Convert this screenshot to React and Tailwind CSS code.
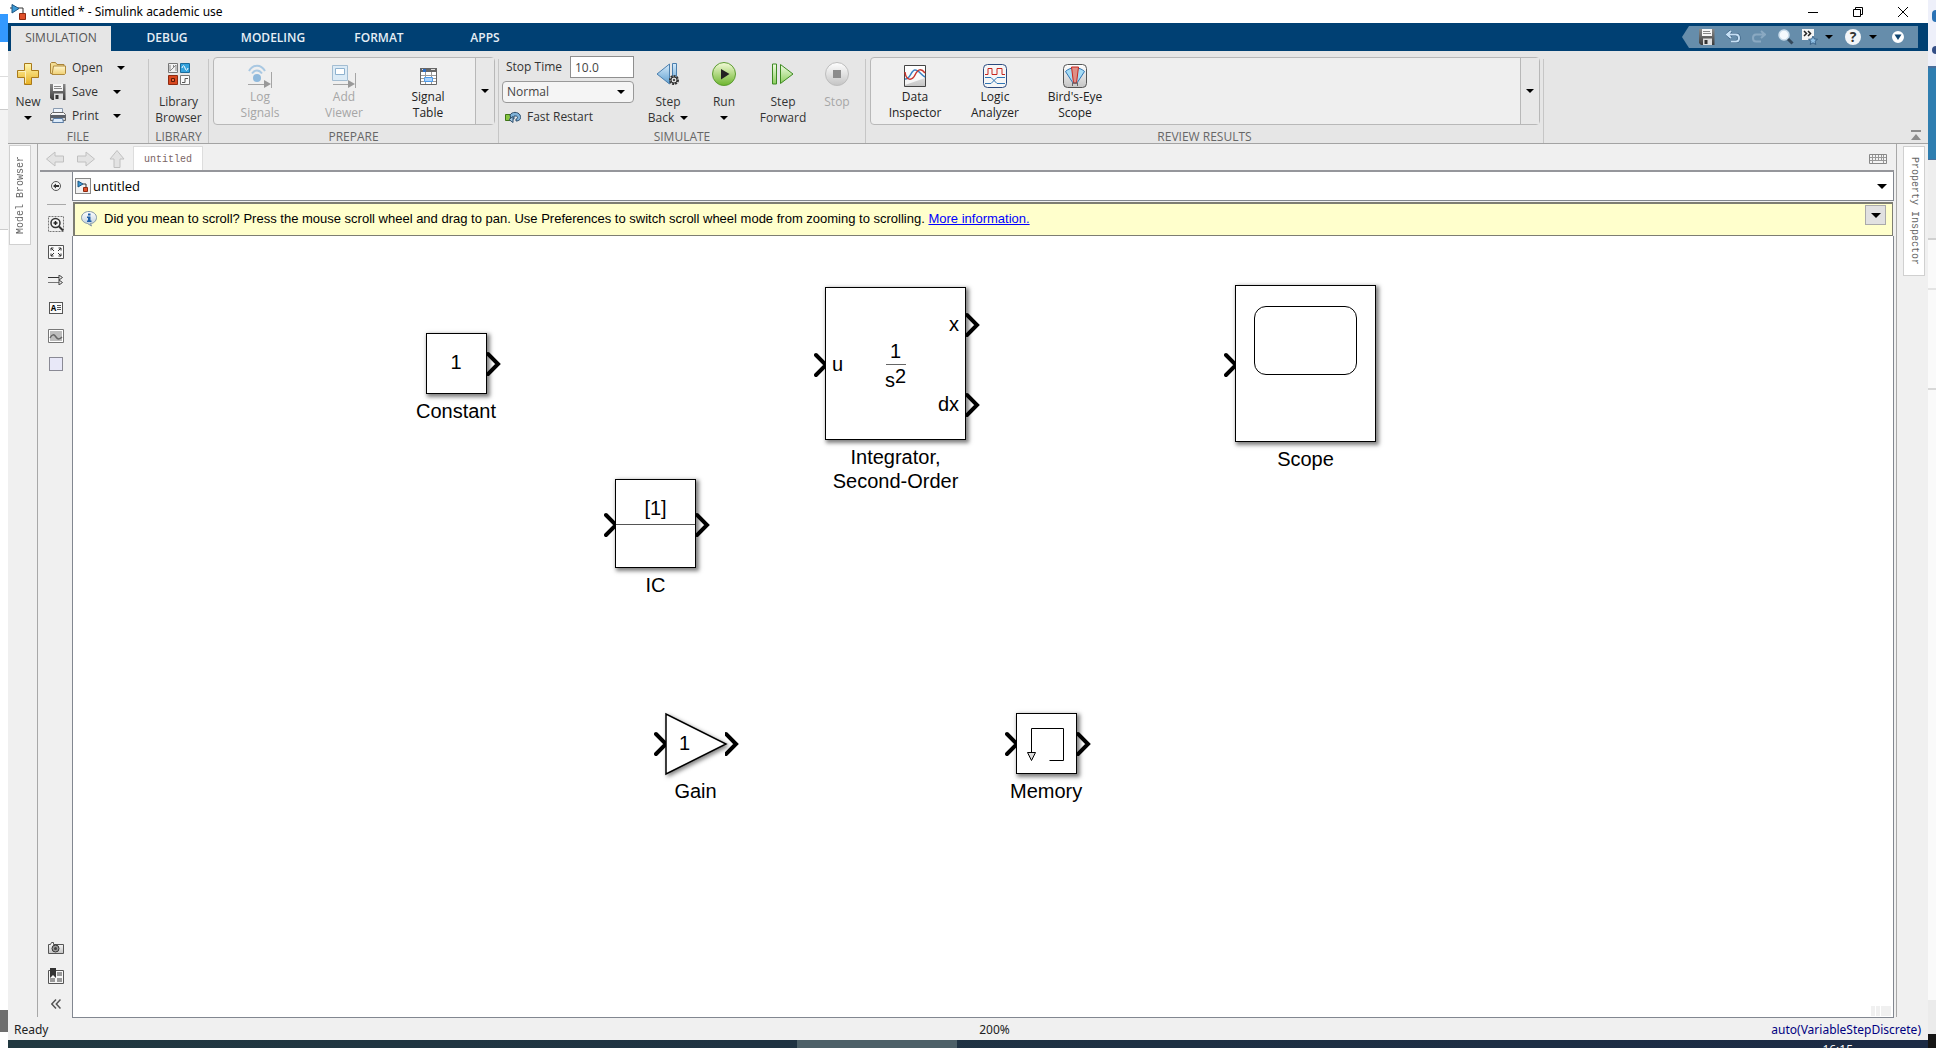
import { useState } from 'react'

/* ── Shared gradients for the toolbar icons ── */
function Gradients() {
    const stops = [
        ['gold', '#fff7b0', '#e8b021'],
        ['folder', '#fff6cf', '#efcf72'],
        ['sky', '#d8ecfb', '#5f9fd0'],
        ['lime', '#f4fbd8', '#6cb52d'],
        ['silver', '#ffffff', '#c4c4c4'],
        ['steel', '#8a8a8a', '#3c3c3c'],
        ['leaf', '#f0fbe4', '#8ccf5c'],
        ['bulb', '#ffffff', '#b9cbd9'],
    ]
    return (
        <svg className="absolute h-0 w-0" aria-hidden="true">
            <defs>
                {stops.map(([id, from, to]) => (
                    <linearGradient key={id} id={id} x1="0" y1="0" x2="0" y2="1">
                        <stop offset="0" stopColor={from} />
                        <stop offset="1" stopColor={to} />
                    </linearGradient>
                ))}
            </defs>
        </svg>
    )
}

function Svg({ w, h, className = '', children }) {
    return (
        <svg width={w} height={h} viewBox={`0 0 ${w} ${h}`} fill="none" className={`shrink-0 ${className}`} aria-hidden="true">
            {children}
        </svg>
    )
}

function Caret({ className = '' }) {
    return (
        <Svg w={8} h={4} className={className}>
            <path d="M0 0h8L4 4z" fill="#000" />
        </Svg>
    )
}

/* ── Toolbar icons ── */
function SimulinkIcon() {
    return (
        <Svg w={16} h={16}>
            <path d="M0 4h2M8 4h5v5" stroke="#333" />
            <path d="M2 .5l7 4-7 4.500z" fill="#3d9ad6" stroke="#1c5480" />
            <path d="M9.500 9.500h6v6h-6z" fill="#e0502a" stroke="#8f2a10" />
        </Svg>
    )
}

function PlusIcon() {
    return (
        <Svg w={22} h={22}>
            <path d="M7.500 .5h7v7h7v7h-7v7h-7v-7h-7v-7h7z" fill="url(#gold)" stroke="#a9791a" />
            <path d="M8.500 20V8.500H1.500" stroke="#fffbe0" opacity=".7" />
        </Svg>
    )
}

function FolderIcon() {
    return (
        <Svg w={16} h={14}>
            <path d="M.5 12.500V2.500l1-1h4l1.500 2h7v9z" fill="#f3dc93" stroke="#a88238" />
            <path d="M2 13.500l1.500-8.500h12v7.500l-1 1z" fill="url(#folder)" stroke="#b08a3c" />
        </Svg>
    )
}

function DiskIcon() {
    return (
        <Svg w={16} h={16}>
            <path d="M0 0h15.500v16H2l-2-2z" fill="url(#steel)" />
            <path d="M3 0h10v7H3z" fill="#f6f6f6" />
            <path d="M4 2.500h7M4 4.500h8" stroke="#888" />
            <path d="M4 9.500h9V16H4z" fill="#ddd" />
            <path d="M5.500 11h3v4h-3z" fill="#333" />
        </Svg>
    )
}

function PrinterIcon() {
    return (
        <Svg w={16} h={16}>
            <path d="M3.500 6V.5h9V6" fill="#eef4fa" stroke="#8a9bb0" />
            <path d="M.5 6.500l2-2h11l2 2v6H.5z" fill="url(#silver)" stroke="#666" />
            <path d="M1 7h14v3H1z" fill="#5a6068" />
            <path d="M3.500 10.500h9l1 4h-11z" fill="#dcebfa" stroke="#5b7da5" />
        </Svg>
    )
}

function LibraryIcon() {
    return (
        <Svg w={22} h={22}>
            <path d="M.5 .5h9v9h-9z" fill="#f2f2f2" stroke="#777" />
            <path d="M2 2v6M2 8l6-6M5.500 2v3M8 2v6" stroke="#888" />
            <path d="M12.500 .5h9v9h-9z" fill="#35a3dd" stroke="#1b6c9c" />
            <path d="M14 5c1-3 2-3 3 0s2 3 3 0" stroke="#fff" />
            <path d="M.5 12.500h9v9h-9z" fill="#d9481f" stroke="#8f2a10" />
            <path d="M3.500 15.500h3v3h-3z" fill="#e9693e" stroke="#5e1a08" />
            <path d="M12.500 12.500h9v9h-9z" fill="#fafafa" stroke="#777" />
            <path d="M14 19.500h3v-4h3" stroke="#555" />
        </Svg>
    )
}

function LogSignalsIcon() {
    return (
        <Svg w={24} h={24}>
            <path d="M1 7c4-7 12-7 16 0M4 9.500c3-4 7-4 10 0" stroke="#a9c8e2" strokeWidth="2" />
            <circle cx="9" cy="14" r="4" fill="#8fb9dc" />
            <path d="M0 20.500h16M23.500 8v16" stroke="#a5a5a5" />
            <path d="M16 16l7 4-7 4z" fill="#999" />
        </Svg>
    )
}

function AddViewerIcon() {
    return (
        <Svg w={24} h={24}>
            <path d="M.5 1.500h15v15H.5z" fill="#dcebf6" stroke="#a3bdd2" />
            <path d="M3.500 4.500h9v6h-9z" fill="#fff" stroke="#8fb2cf" />
            <path d="M1 20.500h16M23.500 9v15" stroke="#a5a5a5" />
            <path d="M16 16l7 4-7 4z" fill="#999" />
        </Svg>
    )
}

function SignalTableIcon() {
    return (
        <Svg w={17} h={17}>
            <path d="M.5 .5h16v16H.5z" fill="#fff" stroke="#666" />
            <path d="M0 0h17v4H0z" fill="#666" />
            <path d="M2 1.500h4M11 1.500h4" stroke="#ddd" />
            <path d="M3 1h3v3H3z" fill="#2b6cc4" />
            <path d="M1 7.500h15M1 10.500h15M1 13.500h15M5.500 4v12M11.500 4v12" stroke="#999" />
            <path d="M4.500 9.500h8v4h-8z" fill="#a9d2fb" stroke="#4e9bea" />
        </Svg>
    )
}

function FastRestartIcon() {
    return (
        <Svg w={16} h={12}>
            <path d="M.5 3.500h5v6h-5z" fill="#86c440" stroke="#3f7515" />
            <path d="M5 4c2-3.500 8-3.500 10 0 2 4-1 6-4 6V8c2 0 2-3 0-3H9v3H6z" fill="#7fb2d8" stroke="#2d4f6e" />
            <path d="M8 11.500L4 8.500l4-3z" fill="#aacbe4" stroke="#2d4f6e" />
        </Svg>
    )
}

function StepBackIcon() {
    return (
        <Svg w={24} h={24}>
            <path d="M13.500 2v20L1 12z" fill="url(#sky)" stroke="#4b7fae" />
            <path d="M16.500 1.500h4v20h-4z" fill="url(#sky)" stroke="#4b7fae" />
            <circle cx="18" cy="18" r="4" fill="#ccc" stroke="#333" strokeWidth="2" strokeDasharray="2 1" />
            <circle cx="18" cy="18" r="3" fill="#ddd" stroke="#333" />
            <circle cx="18" cy="18" r="1" fill="#222" />
        </Svg>
    )
}

function RunIcon() {
    return (
        <Svg w={24} h={24}>
            <circle cx="12" cy="12" r="11.500" fill="url(#lime)" stroke="#5d9c33" />
            <path d="M9 7l8.500 5L9 17.500z" fill="#222" />
        </Svg>
    )
}

function StepForwardIcon() {
    return (
        <Svg w={22} h={22}>
            <path d="M.5 1h4v20h-4z" fill="url(#leaf)" stroke="#3e8a22" />
            <path d="M8.500 1.500L21 11 8.500 20.500z" fill="url(#leaf)" stroke="#3e8a22" />
        </Svg>
    )
}

function StopIcon() {
    return (
        <Svg w={24} h={24}>
            <circle cx="12" cy="12" r="11.500" fill="url(#silver)" stroke="#bdbdbd" />
            <path d="M8 8h8v8H8z" fill="#8c8c8c" />
        </Svg>
    )
}

function DataInspectorIcon() {
    return (
        <Svg w={22} h={22}>
            <path d="M.5 .5h21v21H.5z" fill="url(#silver)" stroke="#444" />
            <path d="M1 1h20v12L1 20z" fill="#fff" opacity=".8" />
            <path d="M1 14c5 1 6-9 10-9s6 5 10 7" stroke="#3a82c4" strokeWidth="1.500" />
            <path d="M1 7c1 9 7 9 10 3s6-7 10-2" stroke="#c8342c" strokeWidth="1.500" />
        </Svg>
    )
}

function LogicAnalyzerIcon() {
    return (
        <Svg w={24} h={24}>
            <rect x=".5" y=".5" width="23" height="23" rx="4" fill="#f6f6f6" stroke="#2b4a7e" />
            <path d="M2 10.500h3v-6h4v6h5v-6h5v6h3" stroke="#c8261e" />
            <path d="M2 13.500h6l6 6h8M2 19.500h6l6-6h8" stroke="#2f75b5" />
        </Svg>
    )
}

function BirdsEyeIcon() {
    return (
        <Svg w={24} h={24}>
            <rect x=".5" y=".5" width="23" height="23" rx="4" fill="url(#silver)" stroke="#555" />
            <path d="M2.500 7.500c5-5 14-5 19 0L14 19h-4z" fill="#a6dcf5" stroke="#2f75b5" />
            <path d="M8.500 3h7l-2 16h-3z" fill="#dd8f87" stroke="#c8261e" />
            <path d="M9.500 22v-3h5v3" stroke="#666" />
        </Svg>
    )
}

/* ── Toolstrip parts ── */
function Section({ title, className = '', children }) {
    return (
        <>
            <section className={`flex flex-col ${className}`}>
                <div className="flex h-[79px]">{children}</div>
                <h2 className="text-center text-xs leading-[13px] text-[#666]">{title}</h2>
            </section>
            <div className="mt-2 w-px bg-[#c6c6c6]" />
        </>
    )
}

function BigButton({ icon, lines, caret, disabled, className = '' }) {
    return (
        <button disabled={disabled} className={`flex flex-col items-center pt-[11px] text-xs leading-4 text-[#333] disabled:text-[#a6a6a6] ${className}`}>
            <span className="mb-2 flex h-6 items-center">{icon}</span>
            <span>{lines[0]}</span>
            <span className="flex h-4 items-center gap-1.5">
                {lines[1]}
                {caret && <Caret />}
            </span>
        </button>
    )
}

function FileRow({ icon, label, className }) {
    return (
        <div className="flex h-6 items-center text-xs text-[#333]">
            <button className={`flex items-center gap-1.5 text-left ${className}`}>
                {icon}
                <span>{label}</span>
            </button>
            <button aria-label={`${label} options`}><Caret /></button>
        </div>
    )
}

function Gallery({ items, itemClass }) {
    return (
        <div className="mt-1.5 mr-[3px] ml-1 flex h-[68px] flex-1 rounded-sm border border-[#b8b8b8] bg-[#efefef]">
            <div className="flex flex-1 pl-1">
                {items.map(item => (
                    <button
                        key={item.lines[0]}
                        disabled={item.disabled}
                        className={`flex flex-col items-center pt-1.5 text-xs leading-4 text-[#222] disabled:text-[#a6a6a6] ${itemClass}`}
                    >
                        <span className="mb-px flex h-6 items-center">{item.icon}</span>
                        <span>{item.lines[0]}</span>
                        <span>{item.lines[1]}</span>
                    </button>
                ))}
            </div>
            <button aria-label="Show more" className="flex w-[19px] items-center justify-center border-l border-[#b8b8b8] bg-[#e8e8e8]">
                <Caret />
            </button>
        </div>
    )
}

const prepareItems = [
    { lines: ['Log', 'Signals'], icon: <LogSignalsIcon />, disabled: true },
    { lines: ['Add', 'Viewer'], icon: <AddViewerIcon />, disabled: true },
    { lines: ['Signal', 'Table'], icon: <SignalTableIcon /> },
]

const reviewItems = [
    { lines: ['Data', 'Inspector'], icon: <DataInspectorIcon /> },
    { lines: ['Logic', 'Analyzer'], icon: <LogicAnalyzerIcon /> },
    { lines: ["Bird's-Eye", 'Scope'], icon: <BirdsEyeIcon /> },
]

function QuickAccess() {
    return (
        <div className="mt-[3px] mr-2.5 flex h-[22px]">
            <Svg w={7} h={22}>
                <path d="M7 0v22L0 11z" fill="#668dab" />
            </Svg>
            <div className="flex items-center bg-[#668dab] pr-3.5 pl-2.5">
                <button aria-label="Save"><DiskIcon /></button>
                <button aria-label="Undo" className="ml-[11px]">
                    <Svg w={15} h={14}>
                        <path d="M5 1L1 4.500 5 8M1.500 4.500H10c4 0 4 7 0 7H5" stroke="#2f5577" strokeWidth="3" />
                        <path d="M5 1L1 4.500 5 8M1.500 4.500H10c4 0 4 7 0 7H5" stroke="#c6e0f5" strokeWidth="2" />
                    </Svg>
                </button>
                <button aria-label="Redo" disabled className="ml-2.5">
                    <Svg w={15} h={14}>
                        <path d="M10 1l4 3.500L10 8M13.500 4.500H5c-4 0-4 7 0 7h5" stroke="#8aa9c2" strokeWidth="2" />
                    </Svg>
                </button>
                <button aria-label="Search" className="ml-3">
                    <Svg w={16} h={16}>
                        <path d="M9.500 9.500l5 5" stroke="#33475a" strokeWidth="3" />
                        <circle cx="6" cy="6" r="5" fill="#f4f9fd" stroke="#c9dceb" strokeWidth="1.500" />
                    </Svg>
                </button>
                <button aria-label="Favorites" className="ml-2 flex items-center gap-[7px]">
                    <Svg w={16} h={16}>
                        <path d="M0 0h12v11H0z" fill="#f4f4f4" />
                        <path d="M2 2l2.500 2.500L2 7M6 2l2.500 2.500L6 7" stroke="#222" strokeWidth="1.500" />
                        <path d="M11 7l1.300 3 3.200.3-2.500 2 .8 3.200-2.800-1.700-2.800 1.700.8-3.200-2.500-2 3.200-.3z" fill="#8fc0e6" stroke="#3a6389" />
                    </Svg>
                    <Caret />
                </button>
                <button aria-label="Help" className="ml-3 flex items-center gap-2">
                    <span className="flex h-4 w-4 items-center justify-center rounded-full bg-[#f2f5f8] text-sm leading-4 font-bold text-[#333]">?</span>
                    <Caret />
                </button>
                <button aria-label="Customize quick access" className="ml-[15px]">
                    <Svg w={12} h={12}>
                        <circle cx="6" cy="6" r="5" fill="#fff" stroke="#fff" strokeWidth="2" />
                        <path d="M2.500 3.500h7L6 9z" fill="#11456f" />
                    </Svg>
                </button>
            </div>
        </div>
    )
}

function TitleBar() {
    return (
        <header className="flex h-[23px] items-center bg-white pr-5 pl-0.5 text-black">
            <SimulinkIcon />
            <h1 className="ml-[5px] flex-1 font-['Noto_Sans','Segoe_UI',sans-serif] text-xs">untitled * - Simulink academic use</h1>
            <div className="flex gap-[35px]">
                <button aria-label="Minimize">
                    <Svg w={10} h={10}><path d="M0 5.500h10" stroke="#000" /></Svg>
                </button>
                <button aria-label="Restore">
                    <Svg w={10} h={10}>
                        <path d="M.5 2.500h7v7h-7zM2.500 2V.5h7v7H8" stroke="#000" />
                    </Svg>
                </button>
                <button aria-label="Close">
                    <Svg w={10} h={10}><path d="M0 0l10 10M10 0L0 10" stroke="#000" /></Svg>
                </button>
            </div>
        </header>
    )
}

function TabBar({ active, onSelect }) {
    return (
        <nav className="flex h-7 items-start justify-between bg-[#004073]">
            <div className="ml-[3px] flex gap-1.5 pt-[3px]">
                {['SIMULATION', 'DEBUG', 'MODELING', 'FORMAT', 'APPS'].map(tab => (
                    <button
                        key={tab}
                        onClick={() => onSelect(tab)}
                        className={`h-[25px] w-[100px] pb-px text-xs ${tab === active ? 'bg-[#e6e6e6] text-[#555]' : 'font-semibold text-[#e6eef5]'}`}
                    >
                        {tab}
                    </button>
                ))}
            </div>
            <QuickAccess />
        </nav>
    )
}

function Toolstrip() {
    return (
        <div className="flex border-b border-[#a3a3a3] bg-[#e6e6e6]">
            <Section title="FILE" className="w-[140px]">
                <BigButton icon={<PlusIcon />} lines={['New', '']} caret className="w-10" />
                <div className="ml-0.5 flex flex-col pt-[5px]">
                    <FileRow icon={<FolderIcon />} label="Open" className="w-[67px]" />
                    <FileRow icon={<DiskIcon />} label="Save" className="w-[63px]" />
                    <FileRow icon={<PrinterIcon />} label="Print" className="w-[63px]" />
                </div>
            </Section>

            <Section title="LIBRARY" className="w-[59px]">
                <BigButton icon={<LibraryIcon />} lines={['Library', 'Browser']} className="w-full" />
            </Section>

            <Section title="PREPARE" className="w-[289px]">
                <Gallery items={prepareItems} itemClass="w-[84px]" />
            </Section>

            <Section title="SIMULATE" className="w-[366px] text-[#333]">
                <div className="ml-[3px] flex w-[132px] flex-col pt-[5px] text-xs">
                    <div className="flex items-center justify-between pl-1">
                        <label htmlFor="stop-time">Stop Time</label>
                        <input id="stop-time" defaultValue="10.0" className="h-[22px] w-16 border border-[#8f8f8f] bg-white px-1 text-[#444]" />
                    </div>
                    <div className="relative mt-[3px]">
                        <select aria-label="Simulation mode" className="h-[22px] w-full appearance-none rounded-sm border border-[#999] bg-[#f5f5f5] px-1 text-[#444]">
                            <option>Normal</option>
                            <option>Accelerator</option>
                            <option>Rapid Accelerator</option>
                        </select>
                        <Caret className="pointer-events-none absolute top-[9px] right-[9px]" />
                    </div>
                    <button className="mt-0.5 flex h-6 items-center gap-1.5 pl-[3px]">
                        <FastRestartIcon />
                        Fast Restart
                    </button>
                </div>
                <BigButton icon={<StepBackIcon />} lines={['Step', 'Back']} caret className="ml-1 w-[60px]" />
                <BigButton icon={<RunIcon />} lines={['Run', '']} caret className="w-[52px]" />
                <BigButton icon={<StepForwardIcon />} lines={['Step', 'Forward']} className="w-[66px]" />
                <BigButton icon={<StopIcon />} lines={['Stop', '']} disabled className="w-[42px]" />
            </Section>

            <Section title="REVIEW RESULTS" className="w-[677px]">
                <Gallery items={reviewItems} itemClass="w-20" />
            </Section>

            <button aria-label="Minimize toolstrip" className="mr-1.5 mb-0.5 ml-auto self-end">
                <Svg w={12} h={11}>
                    <path d="M1 0h10v2H1zM6 4l5 6H1z" fill="#8c8c8c" />
                </Svg>
            </button>
        </div>
    )
}

/* ── Editor frame ── */
function ArrowIcon({ className = '' }) {
    return (
        <Svg w={18} h={16} className={className}>
            <path d="M.5 8L9 1v4h8.500v6H9v4z" fill="#e3e3e3" stroke="#c0c0c0" />
        </Svg>
    )
}

function DocumentTabs() {
    return (
        <div className="flex h-7 items-center border-b-2 border-[#95969b] pl-1.5">
            <button aria-label="Back" disabled className="mt-1"><ArrowIcon /></button>
            <button aria-label="Forward" disabled className="mt-1 ml-[13px]"><ArrowIcon className="rotate-180" /></button>
            <button aria-label="Up" disabled className="mt-1 ml-[13px]"><ArrowIcon className="rotate-90" /></button>
            <button className="ml-[7px] h-6 w-[70px] self-end border border-b-0 border-[#ddd] bg-white pt-0.5 font-['Liberation_Mono',monospace] text-[10px] text-[#7a6464]">
                untitled
            </button>
            <button aria-label="Keyboard" className="mt-1 mr-[7px] ml-auto">
                <Svg w={18} h={10}>
                    <path d="M.5 .5h17v9H.5z" fill="#f4f4f4" stroke="#888" />
                    <path d="M1 3.500h16M1 6.500h16M3.500 1v8M6.500 1v5M9.500 1v5M12.500 1v5M14.500 1v8" stroke="#999" />
                </Svg>
            </button>
        </div>
    )
}

function ToolButton({ label, children }) {
    return (
        <button aria-label={label} className="flex h-7 w-8 items-center justify-center">
            {children}
        </button>
    )
}

function Palette() {
    return (
        <div className="flex w-8 flex-col items-center">
            <ToolButton label="Hide browser">
                <Svg w={10} h={10}>
                    <circle cx="5" cy="5" r="4.500" fill="#f4f4f4" stroke="#555" />
                    <path d="M5 2.500L2 5l3 2.500V6h3V4H5z" fill="#333" />
                </Svg>
            </ToolButton>
            <div className="mt-1 mb-[5px] h-px w-[19px] bg-[#a9a9a9]" />
            <ToolButton label="Fit zoom region">
                <Svg w={16} h={16}>
                    <path d="M.5 .5h15v15H.5z" stroke="#777" strokeDasharray="2 1" />
                    <circle cx="7.500" cy="7" r="4.500" fill="#f4f4f4" stroke="#333" strokeWidth="1.500" />
                    <path d="M5.500 7h4M7.500 5v4" stroke="#222" strokeWidth="1.500" />
                    <path d="M11 10.500l4 4" stroke="#333" strokeWidth="2" />
                </Svg>
            </ToolButton>
            <ToolButton label="Fit to view">
                <Svg w={16} h={14}>
                    <path d="M.5 .5h15v13H.5z" fill="#fafafa" stroke="#555" />
                    <path d="M3 5.500V3h2.500M10.500 3H13v2.500M13 8.500V11h-2.500M5.500 11H3V8.500M3 3l3 3M13 3l-3 3M13 11l-3-3M3 11l3-3" stroke="#333" />
                </Svg>
            </ToolButton>
            <ToolButton label="Sample time">
                <Svg w={16} h={10}>
                    <path d="M0 2.500h14" stroke="#333" />
                    <path d="M0 7.500h14" stroke="#777" />
                    <path d="M11 0l3.500 2.500L11 5zM11 5l3.500 2.500L11 10z" fill="#eee" stroke="#444" />
                </Svg>
            </ToolButton>
            <ToolButton label="Annotation">
                <span className="flex h-3 w-3.5 items-center justify-center gap-px border border-[#555] bg-[#fafafa] text-[8px] leading-none font-bold text-black">
                    A
                    <Svg w={4} h={6}><path d="M0 .5h4M0 2.500h4M0 4.500h4" stroke="#555" /></Svg>
                </span>
            </ToolButton>
            <ToolButton label="Image">
                <Svg w={16} h={14}>
                    <path d="M.5 .5h15v13H.5z" fill="#fff" stroke="#777" />
                    <path d="M2 2h12v10H2z" fill="#bdbdbd" />
                    <path d="M2 9c2-4 4-4 6-1s4 2 6 0" stroke="#666" strokeWidth="1.500" />
                </Svg>
            </ToolButton>
            <ToolButton label="Area">
                <span className="h-3.5 w-3.5 border border-[#8a8a95] bg-[#e8e8f8]" />
            </ToolButton>

            <div className="mt-auto flex flex-col">
                <ToolButton label="Screenshot">
                    <Svg w={16} h={12}>
                        <path d="M.5 2.500h2l1-2h2v2h10v9H.5z" fill="url(#silver)" stroke="#555" />
                        <circle cx="7.500" cy="6.500" r="3.500" fill="#999" stroke="#333" />
                        <circle cx="7.500" cy="6.500" r="1.500" fill="#444" />
                    </Svg>
                </ToolButton>
                <ToolButton label="Model data">
                    <Svg w={16} h={16}>
                        <path d="M.5 2.500h15v13H.5z" fill="#f6f6f6" stroke="#555" />
                        <path d="M9 4h5v4H9zM9 10h5v4H9zM2 10h5v4H2z" fill="#999" />
                        <path d="M2 0h6v10L5 7l-3 3z" fill="#333" />
                    </Svg>
                </ToolButton>
                <ToolButton label="Collapse palette">
                    <Svg w={10} h={10}>
                        <path d="M5 .5L.8 5 5 9.500M9.500 .5L5.300 5l4.200 4.500" stroke="#555" strokeWidth="1.500" />
                    </Svg>
                </ToolButton>
            </div>
        </div>
    )
}

function Breadcrumb() {
    return (
        <div className="flex h-[29px] items-center border border-t-0 border-[#828790] bg-white pr-1.5 pl-0.5">
            <span className="flex h-4 w-4 items-center justify-center border border-[#888] bg-[#f2f2f2]">
                <Svg w={12} h={12}>
                    <path d="M6 4h3v3" stroke="#333" />
                    <path d="M1 1l5 3-5 3z" fill="#3d9ad6" stroke="#1c5480" />
                    <path d="M6.500 7.500h4v4h-4z" fill="#e0502a" stroke="#8f2a10" />
                </Svg>
            </span>
            <a href="#untitled" className="ml-0.5 text-[13px] leading-5 text-black">untitled</a>
            <button aria-label="Show path" className="ml-auto">
                <Svg w={10} h={5}><path d="M0 0h10L5 5z" fill="#000" /></Svg>
            </button>
        </div>
    )
}

function Notice() {
    return (
        <div className="mx-px mt-px flex h-[34px] items-start border border-t-2 border-l-2 border-[#7d7d72] bg-[#ffffcc] pl-1.5 font-['Liberation_Sans',Arial,sans-serif] text-[13px] text-black">
            <Svg w={17} h={16} className="mt-[7px]">
                <path d="M8 .5c4 0 7.500 2.500 7.500 6s-3 6-6 6l1 2.500-4-2.500c-3-.5-6-2.500-6-6s3.500-6 7.500-6z" fill="url(#bulb)" stroke="#8095a5" />
                <path d="M7 2.500h2.500v2H7zM6 5.500h3.500v4h1V11H6V9.500h1V7H6z" fill="#1f5fa8" />
            </Svg>
            <p className="ml-1.5 leading-[30px]">
                Did you mean to scroll? Press the mouse scroll wheel and drag to pan. Use Preferences to switch scroll wheel mode from zooming to scrolling.{' '}
                <a href="#more" className="text-[#0000ff] underline">More information.</a>
            </p>
            <button aria-label="Notice options" className="mt-px mr-1.5 ml-auto flex h-5 w-[21px] items-center justify-center border border-[#aaa] bg-[#e1e1e1]">
                <Svg w={10} h={5}><path d="M0 0h10L5 5z" fill="#000" /></Svg>
            </button>
        </div>
    )
}

/* ── Diagram blocks ── */
function InPort({ className }) {
    return (
        <Svg w={12} h={26} className={`absolute ${className}`}>
            <path d="M2 3l10 10L2 23" stroke="#000" strokeWidth="4" strokeLinecap="round" />
        </Svg>
    )
}

function OutPort({ className }) {
    return (
        <Svg w={14} h={26} className={`absolute ${className}`}>
            <path d="M1 3l10 10L1 23" stroke="#000" strokeWidth="4" strokeLinecap="round" />
        </Svg>
    )
}

function Block({ name, className, bodyClass = '', children }) {
    return (
        <figure className={`absolute flex flex-col items-center ${className}`}>
            <div className={`relative border border-black bg-white shadow-[2px_2px_4px_1px_rgba(0,0,0,0.5)] ${bodyClass}`}>
                {children}
            </div>
            <figcaption className="mt-[5px] text-center leading-6 whitespace-pre">{name}</figcaption>
        </figure>
    )
}

function Canvas() {
    return (
        <main className="relative flex-1 overflow-hidden border border-t-0 border-[#828790] bg-white font-['Liberation_Sans',Arial,sans-serif] text-xl text-black">
            <Block name="Constant" className="top-[97px] left-[342px] w-[82px]" bodyClass="flex h-[61px] w-[61px] items-center justify-center pb-1">
                1
                <OutPort className="top-[17px] left-[60px]" />
            </Block>

            <Block name="IC" className="top-[243px] left-[542px]" bodyClass="h-[89px] w-[81px]">
                <div className="flex h-[45px] items-center justify-center border-b border-[#555] pt-3">[1]</div>
                <InPort className="top-[32px] -left-3" />
                <OutPort className="top-[32px] left-[80px]" />
            </Block>

            <Block name={'Integrator,\nSecond-Order'} className="top-[51px] left-[752px]" bodyClass="flex h-[153px] w-[141px] items-center justify-center">
                <div className="flex flex-col items-center pt-1 leading-[22px]">
                    <span className="w-5 border-b border-[#666] pb-0.5 text-center">1</span>
                    <span className="pt-1">s<sup className="-top-1 text-xl leading-none">2</sup></span>
                </div>
                <span className="absolute top-16 left-1.5 leading-6">u</span>
                <span className="absolute top-6 right-1.5 leading-6">x</span>
                <span className="absolute top-[104px] right-1.5 leading-6">dx</span>
                <InPort className="top-16 -left-3" />
                <OutPort className="top-6 left-[140px]" />
                <OutPort className="top-[104px] left-[140px]" />
            </Block>

            <Block name="Scope" className="top-[49px] left-[1162px]" bodyClass="h-[157px] w-[141px] px-[18px] py-5">
                <div className="h-[69px] rounded-xl border border-black" />
                <InPort className="top-[66px] -left-3" />
            </Block>

            <figure className="absolute top-[477px] left-[592px] flex flex-col items-center">
                <div className="relative h-[61px] w-[61px]">
                    <Svg w={61} h={61} className="overflow-visible drop-shadow-[2px_2px_2px_rgba(0,0,0,0.5)]">
                        <path d="M1 1v60l60-30z" fill="#fff" stroke="#000" strokeWidth="1.500" />
                    </Svg>
                    <span className="absolute top-[18px] left-3.5 leading-6">1</span>
                    <InPort className="top-[18px] -left-[11px]" />
                    <OutPort className="top-[18px] left-[60px]" />
                </div>
                <figcaption className="mt-[5px] leading-6">Gain</figcaption>
            </figure>

            <Block name="Memory" className="top-[477px] left-[937px]" bodyClass="h-[61px] w-[61px]">
                <Svg w={59} h={59}>
                    <path d="M14.500 38V14.500h32v32h-14" stroke="#000" />
                    <path d="M10.500 38.500h8l-4 8z" fill="#ddd" stroke="#000" />
                </Svg>
                <InPort className="top-[17px] -left-3" />
                <OutPort className="top-[17px] left-[60px]" />
            </Block>

            {/* Resize grip */}
            <div className="absolute right-0.5 bottom-px flex h-2.5 gap-px">
                <div className="w-1 bg-[#f0f0f0]" />
                <div className="w-1 bg-[#f0f0f0]" />
                <div className="w-2.5 bg-[#f0f0f0]" />
            </div>
        </main>
    )
}

/* ── Slivers of the windows behind ── */
function LeftDesktop() {
    return (
        <div className="flex w-2 shrink-0 flex-col bg-white">
            <div className="mt-3.5 h-7 bg-[#3399ff]" />
            <div className="mt-[34px] h-px bg-[#ddd]" />
            <div className="mt-8 h-[121px] border-y border-[#ccc] bg-[#f3f3f3]" />
            <div className="mt-auto mb-4 h-[22px] bg-[#6e6e6e]" />
        </div>
    )
}

function RightDesktop() {
    return (
        <div className="flex w-2 shrink-0 flex-col overflow-hidden bg-[#fafafa]">
            <div className="flex h-[66px] flex-col items-end bg-[#eef0fa] pt-2.5">
                <div className="h-3 w-1 rounded-l-full bg-[#2a72b5]" />
                <div className="mt-6 h-2 w-1 rounded-l-full bg-[#344f86]" />
            </div>
            <div className="h-[94px] border-t-2 border-b border-[#4a6f9c] bg-[#2f7eb0]" />
            <div className="h-20 border-b-2 border-[#d0d0d0] bg-[#eee]" />
            <div className="h-[50px] border-b-2 border-[#e4e4e4]" />
            <div className="h-[100px] border-b-2 border-[#d8d8d8]" />
            <div className="mt-auto h-[34px] bg-[#ebebeb]" />
            <div className="h-3.5 bg-[#151515]" />
        </div>
    )
}

function App() {
    const [tab, setTab] = useState('SIMULATION')

    return (
        <div className="flex h-screen overflow-hidden bg-white font-['Open_Sans','Segoe_UI',sans-serif]">
            <Gradients />
            <LeftDesktop />

            <div className="flex min-w-0 flex-1 flex-col bg-[#f0f0f0]">
                <TitleBar />
                <TabBar active={tab} onSelect={setTab} />
                <Toolstrip />

                <div className="flex min-h-0 flex-1">
                    {/* Model browser dock */}
                    <aside className="mb-px w-[30px] border-r border-[#a8a8a8] pt-px pl-px">
                        <button className="flex h-[100px] w-[22px] items-center justify-center border border-[#d0d0d0] bg-white">
                            <span className="rotate-180 font-['Liberation_Mono',monospace] text-[10px] text-[#666] [writing-mode:vertical-rl]">Model Browser</span>
                        </button>
                    </aside>

                    <div className="ml-0.5 flex min-w-0 flex-1 flex-col">
                        <DocumentTabs />
                        <div className="flex min-h-0 flex-1">
                            <Palette />
                            <div className="flex min-w-0 flex-1 flex-col">
                                <Breadcrumb />
                                <Notice />
                                <Canvas />
                            </div>
                        </div>
                    </div>

                    {/* Property inspector dock */}
                    <aside className="mb-px ml-0.5 w-8 border-l border-[#a8a8a8] pt-0.5 pl-1.5">
                        <button className="flex h-[130px] w-[22px] items-center justify-center border border-[#d0d0d0] bg-white">
                            <span className="font-['Liberation_Mono',monospace] text-[10px] text-[#666] [writing-mode:vertical-rl]">Property Inspector</span>
                        </button>
                    </aside>
                </div>

                <footer className="mt-0.5 grid h-5 grid-cols-3 items-center pr-[7px] pl-1.5 font-['Noto_Sans','Segoe_UI',sans-serif] text-xs text-[#222]">
                    <span>Ready</span>
                    <span className="pl-[54px] text-center">200%</span>
                    <span className="text-right text-[#000080]">auto(VariableStepDiscrete)</span>
                </footer>

                {/* Top edge of the taskbar */}
                <div className="flex h-2 items-start justify-between overflow-hidden bg-[linear-gradient(90deg,#213840,#1c2b45)] pr-[75px] pl-[789px]">
                    <div className="h-2 w-40 bg-[#4d6068]" />
                    <time className="pt-0.5 text-xs leading-4 text-white">16:15</time>
                </div>
            </div>

            <RightDesktop />
        </div>
    )
}

export default App
